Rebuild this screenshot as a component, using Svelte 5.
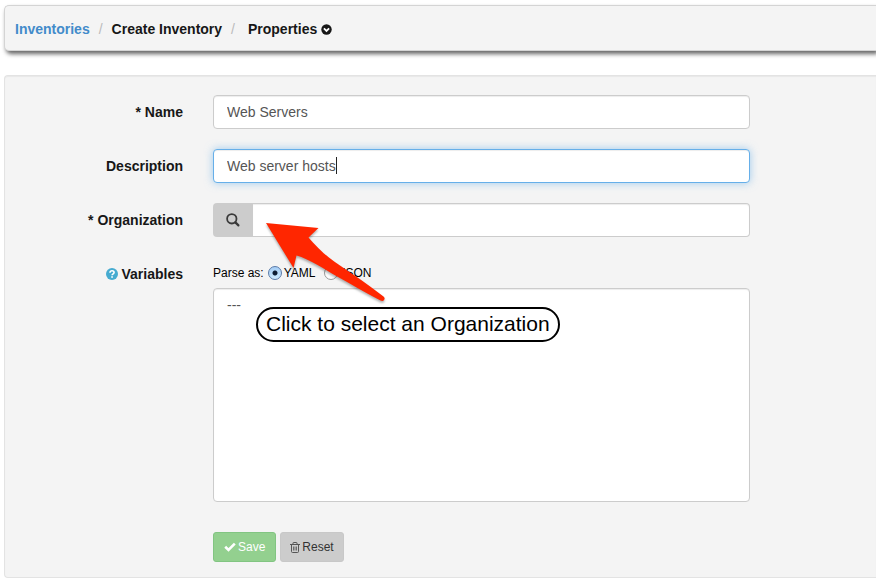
<script>
  let name = $state('Web Servers');
  let description = $state('Web server hosts');
  let organization = $state('');
  let format = $state('yaml');
  let variables = $state('---');

  function reset() {
    name = '';
    description = '';
    organization = '';
    format = 'yaml';
    variables = '---';
  }
</script>

<div class="page">
  <nav class="breadcrumb" aria-label="Breadcrumb">
    <a href="#inventories">Inventories</a>
    <span class="slash">/</span>
    <span>Create Inventory</span>
    <span class="slash">/</span>
    <button type="button" class="properties">
      Properties
      <svg width="11" height="11" viewBox="0 0 11 11" aria-hidden="true">
        <circle cx="5.5" cy="5.5" r="5.2" fill="#171717" />
        <path d="M2.9 4.3 5.5 6.9 8.1 4.3" fill="none" stroke="#fff" stroke-width="1.8" />
      </svg>
    </button>
  </nav>

  <form class="panel" onsubmit={(e) => e.preventDefault()}>
    <label class="caption" for="name">* Name</label>
    <div class="field">
      <input id="name" class="control" type="text" bind:value={name} />
    </div>

    <label class="caption" for="description">Description</label>
    <div class="field">
      <input id="description" class="control active" type="text" bind:value={description} />
      <span class="caret"></span>
    </div>

    <label class="caption" for="organization">* Organization</label>
    <div class="field group">
      <button type="button" class="lookup" aria-label="Select an organization">
        <svg width="14" height="14" viewBox="0 0 14 14" fill="none" stroke="#3a3a3a" aria-hidden="true">
          <circle cx="5.8" cy="5.8" r="4.7" stroke-width="1.8" />
          <path d="M9.4 9.4 12.4 12.4" stroke-width="2.2" stroke-linecap="round" />
        </svg>
      </button>
      <input id="organization" class="control" type="text" bind:value={organization} />
    </div>

    <label class="caption" for="variables">
      <svg width="12" height="12" viewBox="0 0 12 12" aria-hidden="true">
        <circle cx="6" cy="6" r="6" fill="#46abd0" />
        <path d="M4 4.7C4 3.4 4.8 2.8 6 2.8c1.3 0 2.1.7 2.1 1.7C8.1 5.9 6.1 5.8 6.1 7.3" fill="none" stroke="#fff" stroke-width="1.6" />
        <path d="M5.2 8.2h1.7v1.6H5.2z" fill="#fff" />
      </svg>
      Variables
    </label>
    <div class="field variables">
      <div class="parse">
        <span>Parse as:</span>
        <label><input type="radio" name="format" value="yaml" bind:group={format} />YAML</label>
        <label><input type="radio" name="format" value="json" bind:group={format} />JSON</label>
      </div>
      <textarea id="variables" class="control" bind:value={variables}></textarea>

      <svg class="arrow" width="130" height="90" viewBox="0 0 130 90" aria-hidden="true">
        <path
          d="M6 5 58.5 10 48.5 19.5C57 29.5 68 40 80 47.5C94 57 109 67 123.5 78.5Q125.5 80.5 124 82Q123 83.5 120.5 82.5C105 74.5 91 66 78 59C64 51 49 41 36.5 37.500L33.5 50Z"
          fill="#ff2600"
        />
      </svg>
      <div class="callout">Click to select an Organization</div>
    </div>

    <div class="actions">
      <button type="submit" class="btn save">
        <svg width="12" height="10" viewBox="0 0 12 10" aria-hidden="true">
          <path d="M1.2 4.8 4.5 8 10.8 1.7" fill="none" stroke="#fff" stroke-width="2.6" />
        </svg>
        Save
      </button>
      <button type="button" class="btn reset" onclick={reset}>
        <svg width="10" height="11" viewBox="0 0 10 11" fill="none" stroke="#555" aria-hidden="true">
          <path d="M0 2.5H10M3 2.5V1Q3 .5 3.5 .5H6.5Q7 .5 7 1V2.5M1.500 2.5V9.5Q1.5 10.5 2.5 10.5H7.5Q8.5 10.5 8.5 9.5V2.5" />
          <path d="M3.5 4.5V8.5M5 4.5V8.5M6.5 4.5V8.5" stroke-width="0.8" />
        </svg>
        Reset
      </button>
    </div>
  </form>
</div>

<style>
  :global(body) {
    margin: 0;
    background: #fff;
  }

  .page {
    padding: 5px 0 5px 4px;
    font: 14px/20px 'Liberation Sans', Arial, Helvetica, sans-serif;
    color: #171717;
  }

  .page :global(*) {
    box-sizing: border-box;
  }

  button,
  input,
  textarea {
    margin: 0;
    font: inherit;
  }

  svg {
    flex: none;
  }

  .breadcrumb {
    display: flex;
    align-items: center;
    height: 46px;
    padding: 2px 10px 0;
    border: 1px solid #d4d4d4;
    border-right: 0;
    border-radius: 5px 0 0 5px;
    background: #f4f4f4;
    box-shadow: 2px 3px 4px 0 #666;
    font-weight: bold;
  }

  .breadcrumb a {
    color: #428bca;
    text-decoration: none;
  }

  .slash {
    padding: 0 9px;
    color: #bbb;
    font-weight: normal;
  }

  .properties {
    display: flex;
    align-items: center;
    gap: 4px;
    padding: 0 4px;
    border: 0;
    background: none;
    color: inherit;
  }

  .panel {
    display: grid;
    grid-template-columns: 178px minmax(0, 1fr);
    gap: 20px 30px;
    margin: 24px 0 0;
    padding: 19px 126px 15px 0;
    border: 1px solid #e3e3e3;
    border-right: 0;
    border-radius: 4px 0 0 4px;
    background: #f4f4f4;
    box-shadow: inset 0 1px 1px rgba(0, 0, 0, 0.05);
  }

  .caption {
    display: flex;
    align-items: center;
    justify-content: flex-end;
    gap: 4px;
    height: 34px;
    font-weight: bold;
  }

  .field {
    position: relative;
  }

  .control {
    display: block;
    width: 100%;
    height: 34px;
    padding: 6px 13px;
    border: 1px solid #ccc;
    border-radius: 4px;
    outline: 0;
    background: #fff;
    box-shadow: inset 0 1px 1px rgba(0, 0, 0, 0.075);
    color: #555;
  }

  .control.active {
    border-color: #66afe9;
    box-shadow:
      inset 0 1px 1px rgba(0, 0, 0, 0.075),
      0 0 8px rgba(102, 175, 233, 0.6);
  }

  .caret {
    position: absolute;
    top: 8px;
    left: 123px;
    width: 1px;
    height: 17px;
    background: #222;
  }

  .group {
    display: flex;
  }

  .group .control {
    flex: 1;
    border-left: 0;
    border-radius: 0 4px 4px 0;
  }

  .lookup {
    display: flex;
    align-items: center;
    justify-content: center;
    width: 40px;
    padding: 0;
    border: 0;
    border-radius: 4px 0 0 4px;
    background: #ccc;
  }

  .variables {
    padding-top: 6px;
  }

  .parse {
    display: flex;
    align-items: center;
    gap: 8px;
    height: 20px;
    margin-bottom: 5px;
    font-size: 12px;
    color: #000;
  }

  .parse span {
    margin-right: -4px;
  }

  .parse label {
    display: flex;
    align-items: center;
    gap: 2px;
  }

  .parse input {
    appearance: none;
    width: 14px;
    height: 14px;
    border: 1px solid #999;
    border-radius: 50%;
    background: linear-gradient(#f4f4f4, #fff);
  }

  .parse input:checked {
    border-color: #5a7aa8;
    background:
      radial-gradient(circle, #0c1c33 0 2px, transparent 3px),
      linear-gradient(#a5cdf5, #cdeaff);
  }

  textarea.control {
    height: 214px;
    resize: none;
  }

  .arrow {
    position: absolute;
    top: -39px;
    left: 47px;
    filter: drop-shadow(0 2px 1px rgba(0, 0, 0, 0.3));
    pointer-events: none;
  }

  .callout {
    position: absolute;
    top: 50px;
    left: 43px;
    padding: 2px 8px 4px;
    border: 2px solid #000;
    border-radius: 18px;
    background: #fff;
    color: #000;
    font-size: 21px;
    line-height: 25px;
    white-space: nowrap;
  }

  .actions {
    display: flex;
    grid-column: 2;
    gap: 4px;
    padding-top: 10px;
  }

  .btn {
    display: flex;
    align-items: center;
    gap: 2px;
    height: 30px;
    padding: 0 9px;
    border: 1px solid #c8c8c8;
    border-radius: 3px;
    background: #ccc;
    color: #333;
    font-size: 12px;
  }

  .save {
    padding: 0 10px;
    border-color: #82c582;
    background: #93d08f;
    color: #fff;
  }
</style>
